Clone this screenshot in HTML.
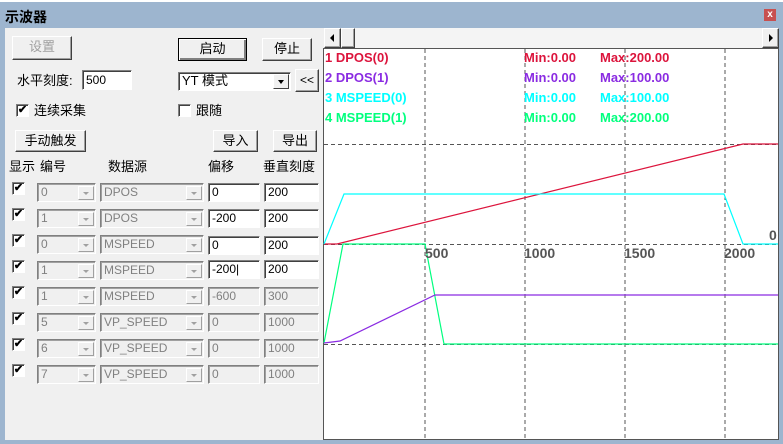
<!DOCTYPE html>
<html><head><meta charset="utf-8"><style>
*{margin:0;padding:0;box-sizing:border-box}
body{width:783px;height:444px;background:#fff;position:relative;overflow:hidden;font-family:"Liberation Sans","Noto Sans CJK SC",sans-serif;font-size:12px;color:#000}
.a{position:absolute}
.btn{position:absolute;background:#f0f0f0;border:1px solid;border-color:#fff #404040 #404040 #fff;box-shadow:inset -1px -1px 0 #a0a0a0;text-align:center;font-size:13px;line-height:20px}
.edit{position:absolute;background:#fff;border:1px solid;border-color:#808080 #fff #fff #808080;box-shadow:inset 1px 1px 0 #404040;font-size:12px;padding-left:3px;line-height:16px}
.dis{background:#f0f0f0;color:#6d6d6d}
.cb{position:absolute;width:13px;height:13px;background:#fff;border:1px solid;border-color:#808080 #fff #fff #808080;box-shadow:inset 1px 1px 0 #404040;font-size:11px;line-height:11px;text-align:center;font-weight:bold}
.combo{position:absolute;background:#f0f0f0;border:1px solid;border-color:#808080 #fff #fff #808080;box-shadow:inset 1px 1px 0 #a0a0a0;color:#808080;font-size:12px;padding-left:3px;line-height:16px;height:19px}
.combo i{position:absolute;right:1px;top:2px;width:16px;height:14px;border:1px solid;border-color:#fff #a0a0a0 #a0a0a0 #fff}
.combo i:after{content:"";position:absolute;left:4px;top:5px;border-left:3.5px solid transparent;border-right:3.5px solid transparent;border-top:3.5px solid #a0a0a0}
.lbl{position:absolute;font-size:13px;line-height:16px}
</style></head><body>
<div class="a" style="left:0;top:2px;width:783px;height:442px;background:#9db5cf"></div>
<div class="a" style="left:5px;top:9px;font-size:14px;font-weight:bold;line-height:16px">示波器</div>
<div class="a" style="left:764px;top:9px;width:12px;height:12px;background:#c75050;color:#fff;font-size:10px;font-weight:bold;line-height:11px;text-align:center">x</div>
<div class="a" style="left:5px;top:28px;width:774px;height:412px;background:#f0f0f0"></div>

<div class="btn" style="left:12px;top:36px;width:60px;height:24px;color:#a0a0a0">设置</div>
<div class="btn" style="left:178px;top:38px;width:69px;height:23px;border-color:#000;box-shadow:inset 1px 1px 0 #fff,inset -2px -2px 0 #808080">启动</div>
<div class="btn" style="left:262px;top:38px;width:50px;height:23px">停止</div>
<div class="lbl" style="left:17px;top:73px">水平刻度:</div>
<div class="edit" style="left:82px;top:70px;width:50px;height:20px;line-height:18px">500</div>
<div class="edit" style="left:178px;top:72px;width:113px;height:19px;font-size:13px">YT 模式<span style="position:absolute;right:1px;top:1px;width:16px;height:15px;background:#f0f0f0;border:1px solid;border-color:#fff #404040 #404040 #fff"><span style="position:absolute;left:4px;top:5px;border-left:3.5px solid transparent;border-right:3.5px solid transparent;border-top:4px solid #000"></span></span></div>
<div class="btn" style="left:295px;top:69px;width:24px;height:23px;font-size:12px">&lt;&lt;</div>
<div class="cb" style="left:16px;top:104px">✔</div>
<div class="lbl" style="left:34px;top:103px">连续采集</div>
<div class="cb" style="left:178px;top:104px"></div>
<div class="lbl" style="left:196px;top:103px">跟随</div>
<div class="btn" style="left:15px;top:130px;width:71px;height:22px">手动触发</div>
<div class="btn" style="left:213px;top:130px;width:45px;height:22px">导入</div>
<div class="btn" style="left:273px;top:130px;width:44px;height:22px">导出</div>
<div class="lbl" style="left:9px;top:159px">显示</div>
<div class="lbl" style="left:40px;top:159px">编号</div>
<div class="lbl" style="left:108px;top:159px">数据源</div>
<div class="lbl" style="left:208px;top:159px">偏移</div>
<div class="lbl" style="left:263px;top:159px">垂直刻度</div>

<div class="cb" style="left:12px;top:182px">✔</div><div class="combo" style="left:37px;top:183px;width:59px">0<i></i></div><div class="combo" style="left:100px;top:183px;width:104px">DPOS<i></i></div><div class="edit" style="left:208px;top:183px;width:52px;height:19px">0</div><div class="edit" style="left:264px;top:183px;width:55px;height:19px">200</div>
<div class="cb" style="left:12px;top:208px">✔</div><div class="combo" style="left:37px;top:209px;width:59px">1<i></i></div><div class="combo" style="left:100px;top:209px;width:104px">DPOS<i></i></div><div class="edit" style="left:208px;top:209px;width:52px;height:19px">-200</div><div class="edit" style="left:264px;top:209px;width:55px;height:19px">200</div>
<div class="cb" style="left:12px;top:234px">✔</div><div class="combo" style="left:37px;top:235px;width:59px">0<i></i></div><div class="combo" style="left:100px;top:235px;width:104px">MSPEED<i></i></div><div class="edit" style="left:208px;top:236px;width:52px;height:19px">0</div><div class="edit" style="left:264px;top:236px;width:55px;height:19px">200</div>
<div class="cb" style="left:12px;top:260px">✔</div><div class="combo" style="left:37px;top:261px;width:59px">1<i></i></div><div class="combo" style="left:100px;top:261px;width:104px">MSPEED<i></i></div><div class="edit" style="left:208px;top:260px;width:52px;height:19px">-200|</div><div class="edit" style="left:264px;top:260px;width:55px;height:19px">200</div>
<div class="cb" style="left:12px;top:286px">✔</div><div class="combo" style="left:37px;top:287px;width:59px">1<i></i></div><div class="combo" style="left:100px;top:287px;width:104px">MSPEED<i></i></div><div class="combo" style="left:208px;top:287px;width:52px">-600</div><div class="combo" style="left:264px;top:287px;width:55px">300</div>
<div class="cb" style="left:12px;top:312px">✔</div><div class="combo" style="left:37px;top:313px;width:59px">5<i></i></div><div class="combo" style="left:100px;top:313px;width:104px">VP_SPEED<i></i></div><div class="combo" style="left:208px;top:313px;width:52px">0</div><div class="combo" style="left:264px;top:313px;width:55px">1000</div>
<div class="cb" style="left:12px;top:338px">✔</div><div class="combo" style="left:37px;top:339px;width:59px">6<i></i></div><div class="combo" style="left:100px;top:339px;width:104px">VP_SPEED<i></i></div><div class="combo" style="left:208px;top:339px;width:52px">0</div><div class="combo" style="left:264px;top:339px;width:55px">1000</div>
<div class="cb" style="left:12px;top:364px">✔</div><div class="combo" style="left:37px;top:365px;width:59px">7<i></i></div><div class="combo" style="left:100px;top:365px;width:104px">VP_SPEED<i></i></div><div class="combo" style="left:208px;top:365px;width:52px">0</div><div class="combo" style="left:264px;top:365px;width:55px">1000</div>

<div class="a" style="left:324px;top:28px;width:455px;height:20px;background:#f4f4f4"></div>
<div class="btn" style="left:324px;top:28px;width:17px;height:20px"><span style="position:absolute;left:5px;top:5px;border-top:4px solid transparent;border-bottom:4px solid transparent;border-right:4px solid #000"></span></div>
<div class="btn" style="left:341px;top:28px;width:14px;height:20px"></div>
<div class="btn" style="left:762px;top:28px;width:17px;height:20px"><span style="position:absolute;left:6px;top:5px;border-top:4px solid transparent;border-bottom:4px solid transparent;border-left:4px solid #000"></span></div>

<svg class="a" style="left:323px;top:48px" width="457" height="392" viewBox="323 48 457 392">
<rect x="323.5" y="48.5" width="455" height="391" fill="#fff" stroke="#555"/>
<g stroke="#555" stroke-dasharray="4,3" fill="none">
<line x1="425" y1="49" x2="425" y2="439"/><line x1="525" y1="49" x2="525" y2="439"/><line x1="625" y1="49" x2="625" y2="439"/><line x1="725" y1="49" x2="725" y2="439"/>
<line x1="324" y1="144.5" x2="778" y2="144.5"/><line x1="324" y1="244.5" x2="778" y2="244.5"/><line x1="324" y1="344.5" x2="778" y2="344.5"/>
</g>
<g fill="none" stroke-width="1.2">
<polyline stroke="#dc143c" points="324,244 337,244 743,144 778,144"/>
<polyline stroke="#00ffff" points="324,244 344,194 724,194 743,244 778,244"/>
<polyline stroke="#00ff7f" points="324,343 343,244 425,244 444,344 778,344"/>
<polyline stroke="#8a2be2" points="324,343 340,341 435,295 778,295"/>
</g>
<g font-family="Liberation Sans,sans-serif" font-size="13" font-weight="bold">
<text x="325" y="62" fill="#dc143c">1 DPOS(0)</text><text x="524" y="62" fill="#dc143c">Min:0.00</text><text x="600" y="62" fill="#dc143c">Max:200.00</text>
<text x="325" y="82" fill="#8a2be2">2 DPOS(1)</text><text x="524" y="82" fill="#8a2be2">Min:0.00</text><text x="600" y="82" fill="#8a2be2">Max:100.00</text>
<text x="325" y="102" fill="#00ffff">3 MSPEED(0)</text><text x="524" y="102" fill="#00ffff">Min:0.00</text><text x="600" y="102" fill="#00ffff">Max:100.00</text>
<text x="325" y="122" fill="#00ff7f">4 MSPEED(1)</text><text x="524" y="122" fill="#00ff7f">Min:0.00</text><text x="600" y="122" fill="#00ff7f">Max:200.00</text>
<g fill="#555" font-size="14"><text x="769" y="240">0</text><text x="425" y="258">500</text><text x="524" y="258">1000</text><text x="624" y="258">1500</text><text x="724" y="258">2000</text></g>
</g>
</svg>
</body></html>
